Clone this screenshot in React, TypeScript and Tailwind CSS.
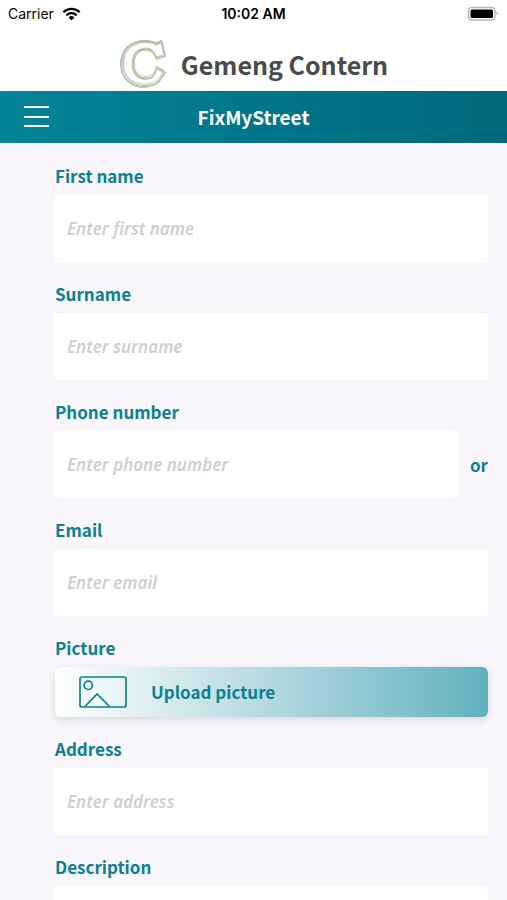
import type { ReactNode } from "react";

const heading = "font-['Noto_Sans_CJK_SC','Noto_Sans',sans-serif] font-bold";
const label = `${heading} block h-6 text-[17px] leading-6 text-[#0b8093]`;
const input =
  "block h-[67px] w-full min-w-0 bg-white px-3 font-['Noto_Sans',sans-serif] text-[17px] italic font-semibold text-[#4a4a4a] placeholder:text-[#cfcfcf] focus:outline-none";

function StatusBar() {
  return (
    <div className="grid h-7 grid-cols-3 items-center px-2 font-['Inter',sans-serif] text-sm text-black">
      <div className="flex items-center gap-2">
        <span>Carrier</span>
        <svg viewBox="0 0 20 15" className="h-[14px] w-[19px]" fill="none" stroke="currentColor" strokeWidth="2.5">
          <path d="M1.3 5.6a12.3 12.3 0 0 1 17.4 0" />
          <path d="M4.5 8.9a7.8 7.8 0 0 1 11 0" />
          <path d="M10 14.4 6.9 11.3a4.4 4.4 0 0 1 6.2 0z" fill="currentColor" stroke="none" />
        </svg>
      </div>
      <span className="text-center font-semibold">10:02 AM</span>
      <svg viewBox="0 0 32 16" className="h-4 w-8 justify-self-end">
        <rect x="1.5" y="1.5" width="26.500" height="12.500" rx="3.5" fill="white" stroke="#b5b5b5" strokeWidth="1.5" />
        <rect x="3.500" y="3.5" width="22.500" height="8.500" rx="1.5" />
        <path d="M29.6 5.5c2 .8 2 3.200 0 4z" fill="#b5b5b5" />
      </svg>
    </div>
  );
}

function Logo() {
  const outline =
    "M38 4.500 42.500 2 46 17l-8.500 2.500C35.500 13 31.500 10 27 10 18 10 13.500 16 13.500 25S18.500 40 27 40c6 0 9.500-4 10.500-11l8.500 4.500-3 4.500C40 44 34 48 25.500 48 11 48 2 38.500 2 25S11 2 25.500 2c5 0 9 1 12.500 2.500z";
  return (
    <svg viewBox="0 0 48 50" className="h-[50px] w-12" fill="none" strokeLinejoin="round">
      <path d={outline} stroke="#7fb3b0" strokeWidth="1.600" />
      <path d={outline} stroke="#f0a99b" strokeWidth="1.100" transform="translate(2.500 1.500) scale(.94)" />
      <path d={outline} stroke="#e8cb93" strokeWidth="1" transform="translate(.5 1.500) scale(.97)" />
      <path d={outline} stroke="#a3d0d2" strokeWidth="1" transform="translate(1.500 -.5) scale(.95)" />
    </svg>
  );
}

function Field({ id, name, hint, after }: { id: string; name: string; hint: string; after?: ReactNode }) {
  return (
    <div className="flex flex-col gap-[7px]">
      <label htmlFor={id} className={label}>
        {name}
      </label>
      <div className="flex items-center gap-3">
        <input id={id} name={id} placeholder={hint} className={input} />
        {after}
      </div>
    </div>
  );
}

export default function App() {
  return (
    <div className="min-h-screen bg-[#f8f6fa]">
      <header className="bg-white">
        <StatusBar />
        <div className="flex h-[63px] items-center justify-center gap-[14px] pt-2">
          <Logo />
          <span className={`${heading} text-[25px] leading-8 text-[#4a4a4a]`}>Gemeng Contern</span>
        </div>
        <div className="grid h-[52px] grid-cols-[1fr_auto_1fr] items-center bg-linear-to-r from-[#058498] to-[#00697c] px-6 text-white">
          <button type="button" aria-label="Menu" className="w-[25px]">
            <svg viewBox="0 0 25 24" className="h-6 w-[25px]" stroke="currentColor" strokeWidth="2">
              <path d="M0 2h25M0 12h25M0 21h25" />
            </svg>
          </button>
          <h1 className={`${heading} text-[19px] leading-6`}>FixMyStreet</h1>
        </div>
      </header>

      <form className="flex flex-col gap-5 pt-[21px] pr-[19px] pl-[55px]">
        <Field id="firstName" name="First name" hint="Enter first name" />
        <Field id="surname" name="Surname" hint="Enter surname" />
        <Field
          id="phone"
          name="Phone number"
          hint="Enter phone number"
          after={<span className={label}>or</span>}
        />
        <Field id="email" name="Email" hint="Enter email" />
        <div className="flex flex-col gap-[7px]">
          <span className={label}>Picture</span>
          <button
            type="button"
            className="flex h-[50px] w-full items-center gap-6 rounded-md bg-linear-to-r from-white to-[#5fb1bf] px-6 shadow-[0_3px_8px_rgba(0,0,0,0.12)]"
          >
            <svg viewBox="0 0 48 32" className="h-8 w-12" fill="none" stroke="#0b8093" strokeWidth="1.700">
              <rect x="1" y="1" width="46" height="30" rx="2" />
              <circle cx="9.300" cy="9.300" r="4.200" />
              <path d="M6 30.500 18 18l12.500 12.500" />
            </svg>
            <span className={label}>Upload picture</span>
          </button>
        </div>
        <Field id="address" name="Address" hint="Enter address" />
        <div className="flex flex-col gap-[7px]">
          <label htmlFor="description" className={label}>
            Description
          </label>
          <textarea id="description" name="description" rows={4} className="block w-full resize-none bg-white p-3 focus:outline-none" />
        </div>
      </form>
    </div>
  );
}
